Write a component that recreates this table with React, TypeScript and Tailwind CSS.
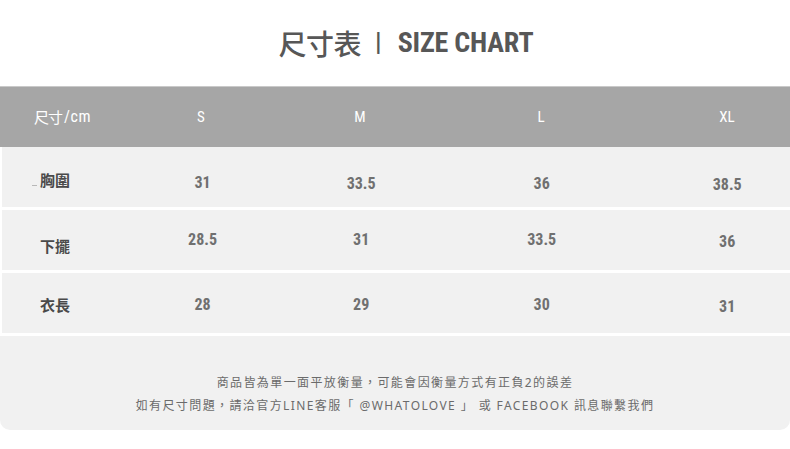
import React from "react";

type Row = {
  label: string;
  labelPad: string;
  values: { text: string; pad: string }[];
  dash?: boolean;
};

// column widths tuned so that each size sits at its centre line
const cols = ["w-[100px]", "w-[202px]", "w-[116px]", "w-[246px]", "w-[126px]"];

const rows: Row[] = [
  {
    label: "胸圍",
    labelPad: "pt-[6px]",
    dash: true,
    values: [
      { text: "31", pad: "pt-[12px]" },
      { text: "33.5", pad: "pt-[14px]" },
      { text: "36", pad: "pt-[14px]" },
      { text: "38.5", pad: "pt-[16px]" },
    ],
  },
  {
    label: "下擺",
    labelPad: "pt-[12px]",
    values: [
      { text: "28.5", pad: "pt-[0px]" },
      { text: "31", pad: "pt-[0px]" },
      { text: "33.5", pad: "pt-[0px]" },
      { text: "36", pad: "pt-[4px]" },
    ],
  },
  {
    label: "衣長",
    labelPad: "pt-[4px]",
    values: [
      { text: "28", pad: "pt-[4px]" },
      { text: "29", pad: "pt-[4px]" },
      { text: "30", pad: "pt-[4px]" },
      { text: "31", pad: "pt-[8px]" },
    ],
  },
];

const narrow = {
  fontFamily:
    '"Liberation Sans Narrow", "Arial Narrow", "Roboto Condensed", "Liberation Sans", "Noto Sans CJK TC", sans-serif',
};
const cjk = { fontFamily: '"Noto Sans CJK TC", sans-serif' };

function App() {
  return (
    <div className="w-[790px] h-[449px] bg-white overflow-hidden">
      {/* Title */}
      <div
        className="h-[86px] flex items-center justify-center pb-[1px] pl-[22px] text-[#575757]"
        style={narrow}
      >
        <span className="text-[28px] font-medium tracking-[-0.5px]" style={cjk}>
          尺寸表
        </span>
        <span className="text-[26px] ml-[14px] mr-[16px] font-bold">|</span>
        <span className="text-[28px] font-bold tracking-[-0.2px]">SIZE CHART</span>
      </div>

      {/* Header */}
      <div
        className="h-[61px] flex border-t border-[#c9c9c9] bg-[#a6a6a6] text-white text-[15px]"
        style={narrow}
      >
        <div className={`${cols[0]} flex items-center pl-[34px]`}>
          <span style={cjk} className="text-[15px] tracking-[-1px]">
            尺寸
          </span>
          <span className="text-[16px] tracking-[0.6px] ml-[2px]">/cm</span>
        </div>
        {["S", "M", "L", "XL"].map((s, i) => (
          <div key={s} className={`${cols[i + 1]} flex items-center justify-center`}>
            {s}
          </div>
        ))}
      </div>

      {/* Body rows */}
      <div className="flex flex-col gap-[3px]">
        {rows.map((row) => (
          <div
            key={row.label}
            className="h-[60px] flex bg-[#f1f1f1] border-l-2 border-white"
            style={narrow}
          >
            <div
              className={`${cols[0]} flex items-center pl-[38px] ${row.labelPad} text-[15px] font-bold text-[#4a4a4a]`}
              style={cjk}
            >
              {row.dash && (
                <span className="inline-block w-[5px] h-[1px] bg-[#b8b8b8] -ml-[8px] mr-[3px] mt-[10px]" />
              )}
              {row.label}
            </div>
            {row.values.map((v, i) => (
              <div
                key={i}
                className={`${cols[i + 1]} flex items-center justify-center ${v.pad} text-[16px] font-bold text-[#707070]`}
              >
                {v.text}
              </div>
            ))}
          </div>
        ))}

        {/* Footer note */}
        <div
          className="h-[94px] bg-[#f1f1f1] rounded-b-[10px] flex flex-col items-center pt-[38px] gap-[5px] text-[12px] tracking-[1.4px] text-[#6b6b6b]"
          style={{ fontFamily: '"Noto Sans", "Noto Sans CJK TC", sans-serif' }}
        >
          <p className="leading-[18px]">商品皆為單一面平放衡量，可能會因衡量方式有正負2的誤差</p>
          <p className="leading-[18px]">
            如有尺寸問題，請洽官方LINE客服「 @WHATOLOVE 」 或 FACEBOOK 訊息聯繫我們
          </p>
        </div>
      </div>
    </div>
  );
}

export default App;
